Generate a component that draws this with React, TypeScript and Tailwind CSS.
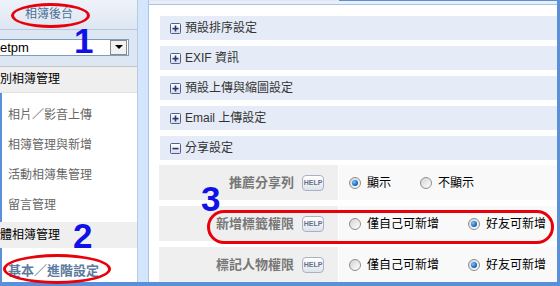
import React from 'react';

const font = { fontFamily: '"Liberation Sans", "Noto Sans CJK TC", sans-serif' };

// small +/- box used by the accordion headers
const ToggleBox: React.FC<{ open?: boolean }> = ({ open }) => (
    <svg width="11" height="11" viewBox="0 0 11 11" className="shrink-0">
        <defs>
            <linearGradient id="tb" x1="0" y1="0" x2="0" y2="1">
                <stop offset="0" stopColor="#ffffff" />
                <stop offset="1" stopColor="#d6dcea" />
            </linearGradient>
        </defs>
        <rect x="0.5" y="0.5" width="10" height="10" rx="1" fill="url(#tb)" stroke="#4f5f8f" />
        <rect x="2.5" y="4.8" width="6" height="1.6" fill="#26366e" />
        {!open && <rect x="4.7" y="2.5" width="1.6" height="6" fill="#26366e" />}
    </svg>
);

const Radio: React.FC<{ checked?: boolean; label: string }> = ({ checked, label }) => (
    <div className="flex items-center mr-[29px] shrink-0">
        <span className="w-[12px] h-[12px] rounded-full border border-[#8d8d8d] bg-gradient-to-br from-[#d4d4d4] to-[#ffffff] flex items-center justify-center shrink-0">
            {checked && (
                <span className="w-[6px] h-[6px] rounded-full bg-[radial-gradient(circle_at_35%_35%,#7fc0ff,#0b5cb8_70%)]" />
            )}
        </span>
        <span className="ml-[6px] text-[12px] text-black leading-none whitespace-nowrap">{label}</span>
    </div>
);

const HelpBadge = () => (
    <span className="w-[22px] h-[16px] shrink-0 rounded-[4px] border border-[#a8b2c4] bg-gradient-to-b from-[#ffffff] to-[#dfe4ec] flex items-center justify-center text-[7px] font-bold text-[#66708a] leading-none">
        HELP
    </span>
);

const sections = [
    { title: '預設排序設定' },
    { title: 'EXIF 資訊' },
    { title: '預設上傳與縮圖設定' },
    { title: 'Email 上傳設定' },
    { title: '分享設定', open: true },
];

const settings = [
    { label: '推薦分享列', options: [{ label: '顯示', checked: true }, { label: '不顯示' }] },
    { label: '新增標籤權限', options: [{ label: '僅自己可新增' }, { label: '好友可新增', checked: true }] },
    { label: '標記人物權限', options: [{ label: '僅自己可新增' }, { label: '好友可新增', checked: true }] },
];

const menuItems = ['相片／影音上傳', '相簿管理與新增', '活動相簿集管理', '留言管理'];

export default function App() {
    return (
        <div className="relative w-[560px] h-[286px] overflow-hidden bg-white flex flex-col" style={font}>
            <div className="flex flex-1 min-h-0">
                {/* Left menu */}
                <div className="w-[138px] flex flex-col shrink-0 border-r border-[#b9cbe0]">
                    <div className="h-[30px] border-b border-[#b7c7dc] bg-gradient-to-b from-[#eef3fa] to-[#dde6f2] flex items-center pl-[25px]">
                        <span className="text-[12px] text-[#4b6d95]">相簿後台</span>
                    </div>
                    <div className="h-[36px] bg-[#dde7f3] pt-[9px]">
                        <div className="h-[17px] w-[129px] bg-white border border-[#7f9db9] border-l-0 flex items-center justify-between">
                            <span className="text-[13px] text-black leading-none">etpm</span>
                            <span className="w-[17px] h-[15px] mr-[1px] border border-[#8a8a8a] bg-[#f2f2f2] flex items-center justify-center">
                                <span className="w-0 h-0 border-l-[4px] border-r-[4px] border-t-[4px] border-l-transparent border-r-transparent border-t-black" />
                            </span>
                        </div>
                    </div>
                    <div className="h-[27px] border-t border-[#c4c4c4] border-b border-b-[#e2e2e2] bg-[#efefef] flex items-center">
                        <span className="text-[12px] text-black">別相簿管理</span>
                    </div>
                    <div className="h-[130px] pt-[7px] border-l-2 border-[#5b8fd8]">
                        {menuItems.map((item) => (
                            <div key={item} className="h-[30px] flex items-center pl-[6px] text-[12px] text-[#666]">
                                {item}
                            </div>
                        ))}
                    </div>
                    <div className="h-[26px] bg-[#efefef] flex items-center">
                        <span className="text-[12px] text-black">體相簿管理</span>
                    </div>
                    <div className="flex-1 pt-[10px] pl-[6px] border-l-2 border-[#5b8fd8]">
                        <span className="text-[13px] leading-[20px] font-bold text-[#5d7b9d]">基本／進階設定</span>
                    </div>
                </div>

                {/* Light blue splitter */}
                <div className="w-[11px] shrink-0 bg-[#d3e6fb] border-r border-[#a9c6ea]" />

                {/* Right content */}
                <div className="flex-1 flex flex-col min-w-0">
                    <div className="flex h-[2px]">
                        <div className="w-[190px] bg-[#dfe7f3]" />
                        <div className="flex-1 bg-[#5b8fd8]" />
                    </div>
                    <div className="h-[7px] bg-[#e9eff8] border-b border-[#a9c3e4]" />
                    <div className="pt-[11px] pl-[11px] flex flex-col gap-[6px]">
                        {sections.map((s) => (
                            <div key={s.title} className="h-[24px] bg-[#e5ecf7] flex items-center pl-[10px]">
                                <ToggleBox open={s.open} />
                                <span className="ml-[4px] text-[12px] text-[#333]">{s.title}</span>
                            </div>
                        ))}
                    </div>
                    <div className="pt-[5px] pl-[10px] flex flex-col gap-[6px]">
                        {settings.map((row) => (
                            <div key={row.label} className="h-[35px] flex shrink-0">
                                <div className="w-[179px] shrink-0 bg-[#efefef] flex items-center justify-end pr-[14px] gap-[8px]">
                                    <span className="text-[13px] font-bold text-[#777] whitespace-nowrap">{row.label}</span>
                                    <HelpBadge />
                                </div>
                                <div className="w-[1px] shrink-0 bg-white" />
                                <div className="flex-1 bg-[#f9f9f9] flex items-center pl-[10px] overflow-hidden">
                                    {row.options.map((o) => (
                                        <Radio key={o.label} label={o.label} checked={o.checked} />
                                    ))}
                                </div>
                            </div>
                        ))}
                    </div>
                </div>

                {/* right frame */}
                <div className="w-[3px] shrink-0 bg-[#5b8fd8]" />
            </div>
            <div className="h-[4px] shrink-0 bg-[#5b8fd8]" />

            {/* Annotations */}
            <div className="absolute left-[11px] top-[3px] w-[79px] h-[25px] rounded-[50%] border-[3px] border-[#e8000b]" />
            <div className="absolute left-[3px] top-[254px] w-[108px] h-[30px] rounded-[50%] border-[3px] border-[#e8000b]" />
            <div className="absolute left-[207px] top-[210px] w-[347px] h-[34px] rounded-full border-[3px] border-[#e8000b]" />
            <span className="absolute left-[74px] top-[23px] text-[35px] leading-none font-bold text-[#1010e8]" style={{ fontFamily: '"Liberation Sans", sans-serif' }}>1</span>
            <span className="absolute left-[73px] top-[218px] text-[35px] leading-none font-bold text-[#1010e8]" style={{ fontFamily: '"Liberation Sans", sans-serif' }}>2</span>
            <span className="absolute left-[201px] top-[181px] text-[35px] leading-none font-bold text-[#1010e8]" style={{ fontFamily: '"Liberation Sans", sans-serif' }}>3</span>
        </div>
    );
}
